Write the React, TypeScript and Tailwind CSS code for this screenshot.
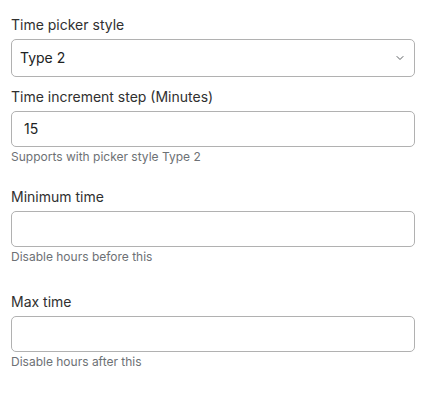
import { ChevronDown } from "lucide-react";

function Help({ text }: { text: string }) {
    return <p className="mt-[2px] text-xs leading-4 text-[#6d7175]">{text}</p>;
}

function Field({ label, value, help, className }: { label: string; value?: string; help?: string; className?: string }) {
    return (
        <div className={className}>
            <label className="block mb-1 text-sm leading-5 text-[#303030]">{label}</label>
            <div className="flex h-[36px] items-center rounded-[5px] border border-[#b1b1b1] bg-white pl-3 text-sm text-[#202223]">
                {value}
            </div>
            {help && <Help text={help} />}
        </div>
    );
}

export default function App() {
    return (
        <div className="min-h-[400px] w-[443px] bg-white pt-[15px] pl-[11px] font-['Inter',sans-serif]">
            <div className="w-[404px]">
                <div>
                    <label className="block mb-1 text-sm leading-5 text-[#303030]">Time picker style</label>
                    <div className="flex h-[38px] items-center justify-between rounded-[5px] border border-[#b1b1b1] bg-white pl-2 pr-[8px] text-sm text-[#202223]">
                        <span>Type 2</span>
                        <ChevronDown size={12} strokeWidth={2} className="text-[#5c5f62]" />
                    </div>
                </div>
                <Field className="mt-[10px]" label="Time increment step (Minutes)" value="15" help="Supports with picker style Type 2" />
                <Field className="mt-[22px]" label="Minimum time" help="Disable hours before this" />
                <Field className="mt-[27px]" label="Max time" help="Disable hours after this" />
            </div>
        </div>
    );
}
